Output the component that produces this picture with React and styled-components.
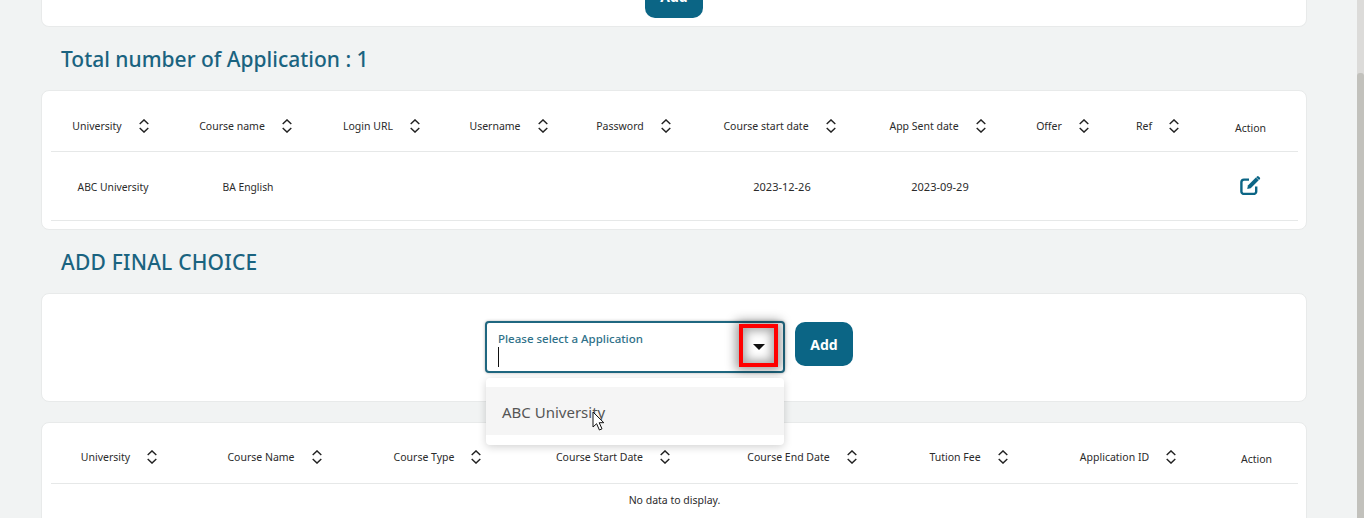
import styled, { createGlobalStyle } from "styled-components";

const applicationColumns = [
  { label: "University", width: 124 },
  { label: "Course name", width: 146 },
  { label: "Login URL", width: 126 },
  { label: "Username", width: 128 },
  { label: "Password", width: 122 },
  { label: "Course start date", width: 170 },
  { label: "App Sent date", width: 146 },
  { label: "Offer", width: 104 },
  { label: "Ref", width: 86 },
];

const choiceColumns = [
  { label: "University", width: 141 },
  { label: "Course Name", width: 170 },
  { label: "Course Type", width: 156 },
  { label: "Course Start Date", width: 195 },
  { label: "Course End Date", width: 183 },
  { label: "Tution Fee", width: 150 },
  { label: "Application ID", width: 169 },
];

const applicationRow = [
  { value: "ABC University" },
  { value: "BA English" },
  { value: "" },
  { value: "" },
  { value: "" },
  { value: "2023-12-26", date: true },
  { value: "2023-09-29", date: true },
  { value: "" },
  { value: "" },
];

function SortIcon() {
  return (
    <SortSvg viewBox="0 0 10 14" fill="none" stroke="currentColor" strokeWidth="1.4">
      <path d="M.7 5 5 .9 9.3 5" />
      <path d="M.7 9 5 13.1 9.3 9" />
    </SortSvg>
  );
}

function EditIcon() {
  return (
    <EditSvg viewBox="0 0 21 20">
      <path
        d="M9 4.6H4A2.6 2.6 0 0 0 1.4 7.2v9.2A2.6 2.6 0 0 0 4 19h9.6a2.6 2.6 0 0 0 2.6-2.6v-5"
        fill="none"
        stroke="currentColor"
        strokeWidth="2.4"
      />
      <path d="M7.2 14l.7-3.5 8-8 2.8 2.8-8 8z" fill="currentColor" />
      <path
        d="M17 1.4a1.2 1.2 0 0 1 1.7 0l1.1 1.1a1.2 1.2 0 0 1 0 1.7l-.8.8-2.8-2.8z"
        fill="currentColor"
      />
    </EditSvg>
  );
}

function HeaderRow({ columns, actionWidth, lifted }) {
  const template = [...columns.map((c) => `${c.width}px`), `${actionWidth}px`].join(" ");
  return (
    <Row $template={template} $height={61}>
      {columns.map((c) => (
        <HeadCell key={c.label} $lifted={lifted}>
          <span>{c.label}</span>
          <SortIcon />
        </HeadCell>
      ))}
      <ActionHead $lifted={lifted}>Action</ActionHead>
    </Row>
  );
}

export default function App() {
  const template = [...applicationColumns.map((c) => `${c.width}px`), "95px"].join(" ");
  return (
    <>
      <GlobalStyle />
      <Page>
        <Content>
          <TopCard>
            <AddButton>Add</AddButton>
          </TopCard>
          <Heading>Total number of Application : 1</Heading>
          <Card>
            <TableWrap>
              <HeaderRow columns={applicationColumns} actionWidth={95} />
              <Row $template={template} $height={69}>
                {applicationRow.map((cell, i) => (
                  <BodyCell key={i} $date={cell.date}>
                    {cell.value}
                  </BodyCell>
                ))}
                <BodyCell $date>
                  <EditIcon />
                </BodyCell>
              </Row>
            </TableWrap>
          </Card>
          <Heading $caps>ADD FINAL CHOICE</Heading>
          <ChoiceCard>
            <SelectWrap>
              <SelectBox>
                <SelectLabel>Please select a Application</SelectLabel>
                <Caret />
                <Arrow />
              </SelectBox>
              <Annotation />
              <Dropdown>
                <Option>ABC University</Option>
              </Dropdown>
              <Pointer viewBox="0 0 13 20">
                <path
                  d="M1 1v15l3.6-3.3L7.4 19l2.6-1.2-2.8-6.1h4.6z"
                  fill="#fff"
                  stroke="#111"
                  strokeWidth="1"
                  strokeLinejoin="round"
                />
              </Pointer>
            </SelectWrap>
            <AddButton>Add</AddButton>
          </ChoiceCard>
          <BottomCard>
            <TableWrap>
              <HeaderRow columns={choiceColumns} actionWidth={83} lifted />
              <EmptyRow>No data to display.</EmptyRow>
            </TableWrap>
          </BottomCard>
        </Content>
        <ScrollTrack>
          <ScrollThumb />
        </ScrollTrack>
      </Page>
    </>
  );
}

const GlobalStyle = createGlobalStyle`
  html, body {
    margin: 0;
    padding: 0;
    overflow: hidden;
    background: #f1f3f3;
    font-family: "Noto Sans", "Open Sans", sans-serif;
  }
  * {
    box-sizing: border-box;
  }
`;

const Page = styled.div`
  display: flex;
  justify-content: space-between;
  width: 1364px;
  height: 518px;
  overflow: hidden;
`;

const Content = styled.main`
  display: flex;
  flex-direction: column;
  width: 1266px;
  margin-left: 41px;
`;

const Card = styled.section`
  flex: none;
  background: #fff;
  border: 1px solid #e8eaea;
  border-radius: 8px;
`;

const TopCard = styled(Card)`
  display: flex;
  justify-content: center;
  align-items: flex-end;
  height: 27px;
  padding-bottom: 8px;
  border-top: 0;
  border-radius: 0 0 8px 8px;
  overflow: hidden;
`;

const ChoiceCard = styled(Card)`
  display: flex;
  justify-content: center;
  align-items: flex-start;
  gap: 10px;
  height: 109px;
  padding: 27px 10px 0 0;
  margin-bottom: 20px;
`;

const BottomCard = styled(Card)`
  height: 120px;
`;

const Heading = styled.h2`
  flex: none;
  display: flex;
  align-items: center;
  height: 63px;
  margin: 0;
  padding: 1px 0 0 20px;
  font-size: 21px;
  font-weight: 500;
  letter-spacing: ${(p) => (p.$caps ? "0.2px" : "0")};
  color: #1a6380;
`;

const TableWrap = styled.div`
  margin: 0 8px 8px 9px;
`;

const Row = styled.div`
  display: grid;
  grid-template-columns: ${(p) => p.$template};
  height: ${(p) => p.$height}px;
  border-bottom: 1px solid #e6e8e8;
`;

const HeadCell = styled.div`
  display: flex;
  justify-content: center;
  align-items: center;
  gap: 17px;
  padding: ${(p) => (p.$lifted ? "7px" : "9px")} 5px 0 0;
  font-size: 10.5px;
  color: #2b2b2b;
  white-space: nowrap;
`;

const ActionHead = styled.div`
  display: flex;
  justify-content: center;
  align-items: center;
  padding-top: ${(p) => (p.$lifted ? "11px" : "13px")};
  font-size: 10.5px;
  color: #2b2b2b;
`;

const SortSvg = styled.svg`
  flex: none;
  width: 10px;
  height: 14px;
  color: #222;
`;

const BodyCell = styled.div`
  display: flex;
  justify-content: center;
  align-items: center;
  padding-top: ${(p) => (p.$date ? "0" : "1px")};
  font-size: ${(p) => (p.$date ? "11px" : "10.3px")};
  color: #2b2b2b;
`;

const EditSvg = styled.svg`
  width: 21px;
  height: 20px;
  margin-bottom: 2px;
  color: #0b6585;
`;

const EmptyRow = styled.div`
  padding-top: 9px;
  text-align: center;
  font-size: 10.5px;
  color: #2b2b2b;
`;

const AddButton = styled.button`
  flex: none;
  width: 58px;
  height: 44px;
  margin-top: 1px;
  padding: 0;
  background: #0b6585;
  border: 0;
  border-radius: 10px;
  color: #fff;
  font-family: inherit;
  font-size: 14px;
  font-weight: 700;
`;

const SelectWrap = styled.div`
  position: relative;
  width: 300px;
`;

const SelectBox = styled.div`
  position: relative;
  height: 52px;
  padding: 8px 11px;
  background: #fff;
  border: 2px solid #1f6780;
  border-radius: 4px;
  box-shadow: 0 0 3px rgba(0, 0, 0, 0.3);
`;

const SelectLabel = styled.div`
  font-size: 11.5px;
  font-weight: 500;
  line-height: 15px;
  color: #2f7189;
`;

const Caret = styled.div`
  width: 1px;
  height: 20px;
  margin-top: 1px;
  background: #111;
`;

const Arrow = styled.div`
  position: absolute;
  top: 21px;
  right: 18px;
  border-style: solid;
  border-width: 6px 6px 0;
  border-color: #111 transparent transparent;
`;

const Annotation = styled.div`
  position: absolute;
  top: 3px;
  left: 254px;
  width: 39px;
  height: 43px;
  border: 4px solid #f00;
  box-shadow: 0 0 10px 3px rgba(0, 0, 0, 0.4), inset 0 0 10px 3px rgba(0, 0, 0, 0.35);
`;

const Dropdown = styled.div`
  position: absolute;
  top: 57px;
  left: 1px;
  width: 298px;
  height: 67px;
  padding: 9px 0;
  background: #fff;
  border-radius: 4px;
  box-shadow: 0 2px 8px rgba(0, 0, 0, 0.18);
  z-index: 1;
`;

const Option = styled.div`
  display: flex;
  align-items: center;
  height: 48px;
  padding: 2px 0 0 16px;
  background: #f5f5f5;
  font-size: 15px;
  color: #555;
`;

const Pointer = styled.svg`
  position: absolute;
  top: 90px;
  left: 107px;
  width: 13px;
  height: 20px;
  z-index: 2;
`;

const ScrollTrack = styled.div`
  flex: none;
  width: 7px;
  height: 100%;
  background: #dcdbd9;
`;

const ScrollThumb = styled.div`
  height: 445px;
  margin-top: 73px;
  background: #c2c1bc;
  border-radius: 3px 3px 0 0;
`;
